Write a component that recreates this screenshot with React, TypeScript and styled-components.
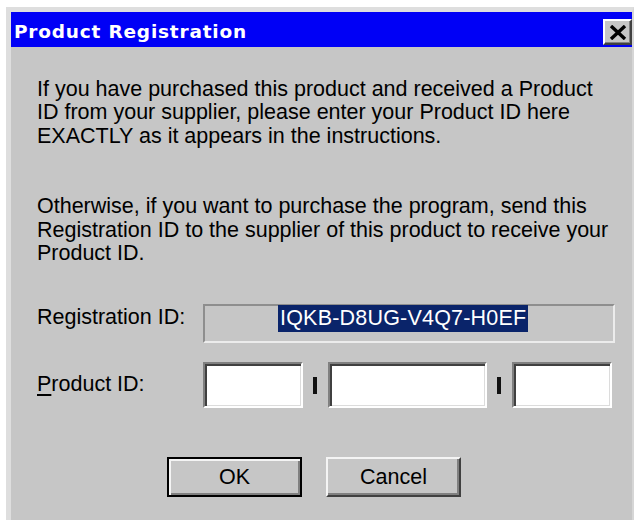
import React from "react";
import styled, { createGlobalStyle } from "styled-components";

const GlobalStyle = createGlobalStyle`
	html, body {
		margin: 0;
		background: #ffffff;
	}
	body {
		font-family: "Liberation Sans", Arial, sans-serif;
	}
`;

const App = () => {
	return (
		<Page>
			<GlobalStyle />
			<Window>
				<TitleBar>
					<Title>Product Registration</Title>
					<CloseButton aria-label='Close'>
						<svg width='18' height='15' viewBox='0 0 18 15'>
							<path
								d='M2 1 L16 14 M16 1 L2 14'
								stroke='#000'
								strokeWidth='3.4'
								fill='none'
							/>
						</svg>
					</CloseButton>
				</TitleBar>
				<Body>
					<Text>
						If you have purchased this product and received a Product
						<br />
						ID from your supplier, please enter your Product ID here
						<br />
						EXACTLY as it appears in the instructions.
					</Text>
					<Text $gap={47}>
						Otherwise, if you want to purchase the program, send this
						<br />
						Registration ID to the supplier of this product to receive your
						<br />
						Product ID.
					</Text>
					<FieldRow $gap={38.6} $align='start'>
						<Label $top={2}>Registration ID:</Label>
						<ReadOnlyField>
							<Selection>IQKB-D8UG-V4Q7-H0EF</Selection>
						</ReadOnlyField>
					</FieldRow>
					<FieldRow $gap={19} $align='center'>
						<Label>
							<u>P</u>roduct ID:
						</Label>
						<Inputs>
							<Input $width={100} />
							<Dash />
							<Input $width={159} />
							<Dash />
							<Input $width={100} />
						</Inputs>
					</FieldRow>
					<ButtonRow>
						<Button $primary>OK</Button>
						<Button>Cancel</Button>
					</ButtonRow>
				</Body>
			</Window>
		</Page>
	);
};

export default App;

const Page = styled.div`
	padding: 7px 0 0 6px;
	height: 520px;
	box-sizing: border-box;
	overflow: hidden;
`;

const Window = styled.div`
	width: 628px;
	height: 540px;
	box-sizing: border-box;
	border-top: 5px solid #dedede;
	border-left: 5px solid #dedede;
	border-right: 2px solid #d6d6d6;
	background: #c6c6c6;
	display: flex;
	flex-direction: column;
`;

const TitleBar = styled.div`
	height: 35px;
	background: #0000f6;
	display: flex;
	align-items: center;
	justify-content: space-between;
	padding-left: 3px;
`;

const Title = styled.span`
	font-family: "DejaVu Sans", Verdana, sans-serif;
	font-weight: bold;
	font-size: 18.5px;
	letter-spacing: 0.8px;
	color: #ffffff;
	padding-top: 3px;
`;

const CloseButton = styled.button`
	width: 29px;
	height: 26px;
	margin-top: 5px;
	padding: 0;
	box-sizing: border-box;
	background: #c6c6c6;
	border: 2px solid;
	border-color: #ffffff #404040 #404040 #ffffff;
	box-shadow: inset -1px -1px 0 #808080;
	display: flex;
	align-items: center;
	justify-content: center;
`;

const Body = styled.div`
	padding: 31px 17px 0 26px;
	color: #000000;
	font-size: 21.5px;
`;

const Text = styled.p<{ $gap?: number }>`
	margin: ${(p) => p.$gap || 0}px 0 0;
	line-height: 23.4px;
	white-space: nowrap;
`;

const FieldRow = styled.div<{ $gap: number; $align: string }>`
	margin-top: ${(p) => p.$gap}px;
	display: grid;
	grid-template-columns: 166px 412px;
	align-items: ${(p) => p.$align};
`;

const Label = styled.span<{ $top?: number }>`
	line-height: 23.4px;
	padding-top: ${(p) => p.$top || 0}px;

	u {
		text-underline-offset: 3px;
	}
`;

const ReadOnlyField = styled.div`
	height: 39px;
	box-sizing: border-box;
	border: 2px solid;
	border-color: #8e8e8e #ececec #ececec #8e8e8e;
	background: #c6c6c6;
	padding-left: 73px;
	display: flex;
	align-items: flex-start;
`;

const Selection = styled.span`
	background: #0a246a;
	color: #ffffff;
	height: 27px;
	line-height: 27px;
	padding: 0 2px;
	letter-spacing: 0.2px;
	margin-top: -1px;
`;

const Inputs = styled.div`
	display: flex;
	align-items: center;
`;

const Input = styled.input<{ $width: number }>`
	width: ${(p) => p.$width}px;
	height: 46px;
	box-sizing: border-box;
	margin: 0;
	border: 2px solid;
	border-color: #808080 #ffffff #ffffff #808080;
	box-shadow: inset 2px 2px 0 #404040, inset -1px -1px 0 #dcdcdc;
	background: #ffffff;
	outline: none;
`;

const Dash = styled.span`
	width: 4px;
	height: 17px;
	background: #111111;
	margin: 0 11px 0 10px;
`;

const ButtonRow = styled.div`
	margin-top: 49px;
	padding-left: 130px;
	display: flex;
	gap: 24px;
`;

const Button = styled.button<{ $primary?: boolean }>`
	width: 135px;
	height: 40px;
	box-sizing: border-box;
	font-family: "Liberation Sans", Arial, sans-serif;
	font-size: 21.5px;
	color: #000000;
	background: #c6c6c6;
	padding: 0;
	border: 2px solid;
	border-color: ${(p) =>
		p.$primary ? "#000000" : "#f4f4f4 #404040 #404040 #f4f4f4"};
	box-shadow: ${(p) =>
		p.$primary
			? "inset 2px 2px 0 #f4f4f4, inset -2px -2px 0 #808080"
			: "inset -2px -2px 0 #808080"};
`;
